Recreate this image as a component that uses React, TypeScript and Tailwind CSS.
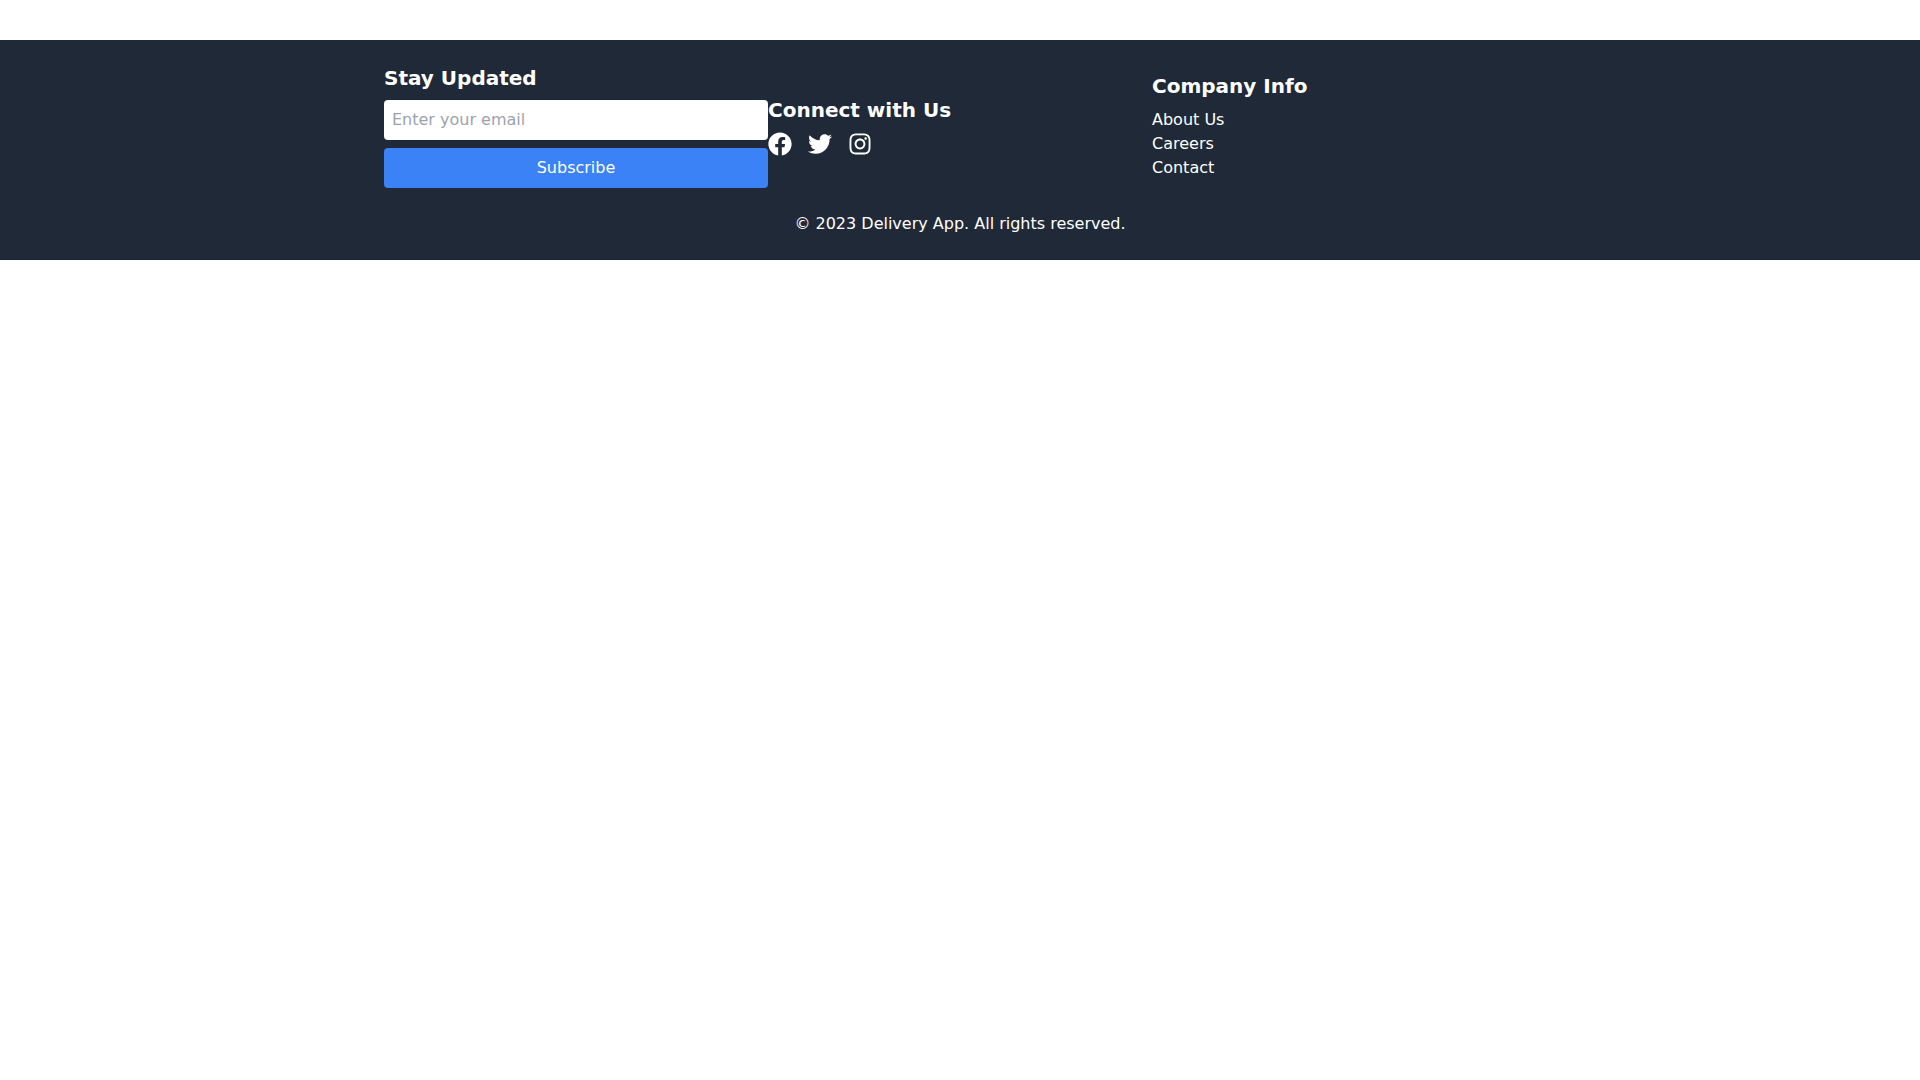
import { FaFacebook, FaInstagram, FaTwitter } from 'react-icons/fa';

export default function App() {
  return (
    <div className="min-h-screen bg-white pt-10 font-['DejaVu_Sans',sans-serif]">
      <footer className="bg-[#1f2937] text-white py-6">
        <div className="max-w-6xl mx-auto">
          <div className="flex items-center">
            {/* Newsletter */}
            <div className="w-1/3">
              <h3 className="text-xl font-bold mb-2">Stay Updated</h3>
              <form className="flex flex-col gap-2">
                <input
                  type="email"
                  placeholder="Enter your email"
                  className="w-full p-2 rounded bg-white text-black placeholder:text-[#9ca3af] outline-none"
                />
                <button type="button" className="w-full p-2 rounded bg-[#3b82f6] text-white">
                  Subscribe
                </button>
              </form>
            </div>

            {/* Social */}
            <div className="w-1/3">
              <h3 className="text-xl font-bold mb-2">Connect with Us</h3>
              <div className="flex gap-4">
                <a href="#"><FaFacebook size={24} /></a>
                <a href="#"><FaTwitter size={24} /></a>
                <a href="#"><FaInstagram size={24} /></a>
              </div>
            </div>

            {/* Links */}
            <div className="w-1/3">
              <h3 className="text-xl font-bold mb-2">Company Info</h3>
              <ul>
                <li><a href="#">About Us</a></li>
                <li><a href="#">Careers</a></li>
                <li><a href="#">Contact</a></li>
              </ul>
            </div>
          </div>
          <p className="mt-6 text-center">© 2023 Delivery App. All rights reserved.</p>
        </div>
      </footer>
    </div>
  );
}
